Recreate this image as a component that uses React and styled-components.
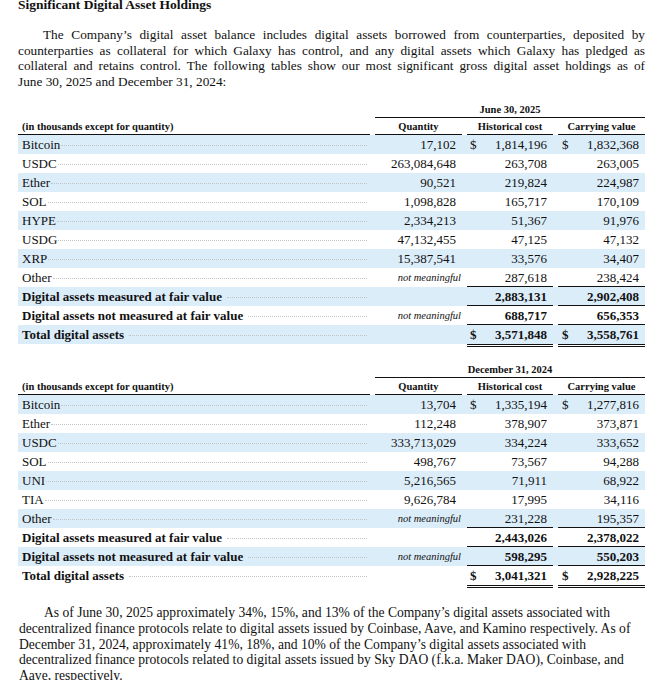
import React from "react";
import styled, { createGlobalStyle } from "styled-components";

const GlobalStyle = createGlobalStyle`
	html, body {
		margin: 0;
		padding: 0;
		background: #fff;
	}
	body {
		font-family: "Liberation Serif", "Times New Roman", serif;
		color: #111;
	}
`;

const Page = styled.div`
	width: 627px;
	padding: 0 25px 0 18px;
	margin-top: -2px;
	overflow: hidden;
	height: 682px;
`;

const Heading = styled.h2`
	margin: 0;
	font-size: 13.5px;
	line-height: 14px;
	font-weight: 700;
`;

const Intro = styled.div`
	margin-top: 15px;
	font-size: 13.3px;
	line-height: 15.6px;
`;

const Line = styled.div`
	text-align: justify;
	text-align-last: ${(p) => (p.$last ? "left" : "justify")};
	padding-left: ${(p) => (p.$indent ? "25px" : "0")};
	white-space: nowrap;
`;

const Table = styled.div`
	margin-top: ${(p) => p.$top}px;
	display: flex;
	flex-direction: column;
`;

const Grid = styled.div`
	display: grid;
	grid-template-columns: 352px 87px 86px 87px;
	column-gap: 5px;
`;

const DateHead = styled.div`
	grid-column: 2 / 5;
	text-align: center;
	font-size: 10.5px;
	font-weight: 700;
	line-height: 14px;
	border-bottom: 1.5px solid #111;
`;

const ColHead = styled.div`
	font-size: 10.5px;
	font-weight: 700;
	line-height: 15px;
	padding-top: 1px;
	text-align: ${(p) => (p.$left ? "left" : "center")};
	padding-left: ${(p) => (p.$left ? "4px" : "0")};
	border-bottom: 1.5px solid #111;
	white-space: nowrap;
`;

const Row = styled(Grid)`
	grid-template-rows: 19px;
	background: ${(p) => (p.$shade ? "#dcedfa" : "transparent")};
	font-size: 13px;
	line-height: 19px;
	font-weight: ${(p) => (p.$bold ? 700 : 400)};
`;

const Label = styled.div`
	display: flex;
	align-items: baseline;
	padding: 0 3px 0 4px;
	white-space: nowrap;
`;

const Leader = styled.span`
	flex: 1;
	margin-left: ${(p) => (p.$bold ? "5px" : "1px")};
	border-bottom: 1px dotted #c4c4c4;
	transform: translateY(-3px);
`;

const Qty = styled.div`
	text-align: right;
	padding-right: ${(p) => (p.$nm ? "1px" : "6px")};
	font-size: ${(p) => (p.$nm ? "10.5px" : "13px")};
	font-style: ${(p) => (p.$nm ? "italic" : "normal")};
	font-weight: ${(p) => (p.$nm ? 400 : "inherit")};
	white-space: nowrap;
`;

const Value = styled.div`
	box-sizing: ${(p) => (p.$rule === "double" ? "content-box" : "border-box")};
	height: 19px;
	display: flex;
	justify-content: space-between;
	padding: 0 6px 0 ${(p) => (p.$dollarPad ? p.$dollarPad : 3)}px;
	border-bottom: ${(p) =>
		p.$rule === "double"
			? "3.5px double #111"
			: p.$rule === "single"
			? "1.5px solid #111"
			: "none"};
`;

const Closing = styled.div`
	margin-top: 20px;
	font-size: 13.6px;
	line-height: 15.7px;
	margin-left: 1px;
`;

const NM = "not meaningful";

const june = [
	["Bitcoin", "17,102", "1,814,196", "1,832,368", { dollar: true }],
	["USDC", "263,084,648", "263,708", "263,005"],
	["Ether", "90,521", "219,824", "224,987"],
	["SOL", "1,098,828", "165,717", "170,109"],
	["HYPE", "2,334,213", "51,367", "91,976"],
	["USDG", "47,132,455", "47,125", "47,132"],
	["XRP", "15,387,541", "33,576", "34,407"],
	["Other", NM, "287,618", "238,424", { rule: "single" }],
	["Digital assets measured at fair value", "", "2,883,131", "2,902,408", { bold: true, rule: "single" }],
	["Digital assets not measured at fair value", NM, "688,717", "656,353", { bold: true, rule: "single" }],
	["Total digital assets", "", "3,571,848", "3,558,761", { bold: true, rule: "double", dollar: true }],
];

const december = [
	["Bitcoin", "13,704", "1,335,194", "1,277,816", { dollar: true }],
	["Ether", "112,248", "378,907", "373,871"],
	["USDC", "333,713,029", "334,224", "333,652"],
	["SOL", "498,767", "73,567", "94,288"],
	["UNI", "5,216,565", "71,911", "68,922"],
	["TIA", "9,626,784", "17,995", "34,116"],
	["Other", NM, "231,228", "195,357", { rule: "single" }],
	["Digital assets measured at fair value", "", "2,443,026", "2,378,022", { bold: true, rule: "single" }],
	["Digital assets not measured at fair value", NM, "598,295", "550,203", { bold: true, rule: "single" }],
	["Total digital assets", "", "3,041,321", "2,928,225", { bold: true, rule: "double", dollar: true }],
];

function Holdings({ date, rows, top }) {
	return (
		<Table $top={top}>
			<Grid>
				<DateHead>{date}</DateHead>
			</Grid>
			<Grid>
				<ColHead $left>(in thousands except for quantity)</ColHead>
				<ColHead>Quantity</ColHead>
				<ColHead>Historical cost</ColHead>
				<ColHead>Carrying value</ColHead>
			</Grid>
			{rows.map(([label, qty, cost, carry, opts = {}], i) => (
				<Row key={label} $shade={i % 2 === 0} $bold={opts.bold}>
					<Label>
						{label}
						<Leader $bold={opts.bold} />
					</Label>
					<Qty $nm={qty === NM}>{qty}</Qty>
					<Value $rule={opts.rule}>
						<span>{opts.dollar ? "$" : ""}</span>
						<span>{cost}</span>
					</Value>
					<Value $rule={opts.rule} $dollarPad={4}>
						<span>{opts.dollar ? "$" : ""}</span>
						<span>{carry}</span>
					</Value>
				</Row>
			))}
		</Table>
	);
}

export default function App() {
	return (
		<>
			<GlobalStyle />
			<Page>
				<Heading>Significant Digital Asset Holdings</Heading>
				<Intro>
					<Line $indent>
						The Company’s digital asset balance includes digital assets borrowed from counterparties, deposited by
					</Line>
					<Line>
						counterparties as collateral for which Galaxy has control, and any digital assets which Galaxy has pledged as
					</Line>
					<Line>
						collateral and retains control. The following tables show our most significant gross digital asset holdings as of
					</Line>
					<Line $last>June 30, 2025 and December 31, 2024:</Line>
				</Intro>
				<Holdings date="June 30, 2025" rows={june} top={14} />
				<Holdings date="December 31, 2024" rows={december} top={19} />
				<Closing>
					<Line $indent $last>
						As of June 30, 2025 approximately 34%, 15%, and 13% of the Company’s digital assets associated with
					</Line>
					<Line $last>
						decentralized finance protocols relate to digital assets issued by Coinbase, Aave, and Kamino respectively. As of
					</Line>
					<Line $last>
						December 31, 2024, approximately 41%, 18%, and 10% of the Company’s digital assets associated with
					</Line>
					<Line $last>
						decentralized finance protocols related to digital assets issued by Sky DAO (f.k.a. Maker DAO), Coinbase, and
					</Line>
					<Line $last>Aave, respectively.</Line>
				</Closing>
			</Page>
		</>
	);
}
